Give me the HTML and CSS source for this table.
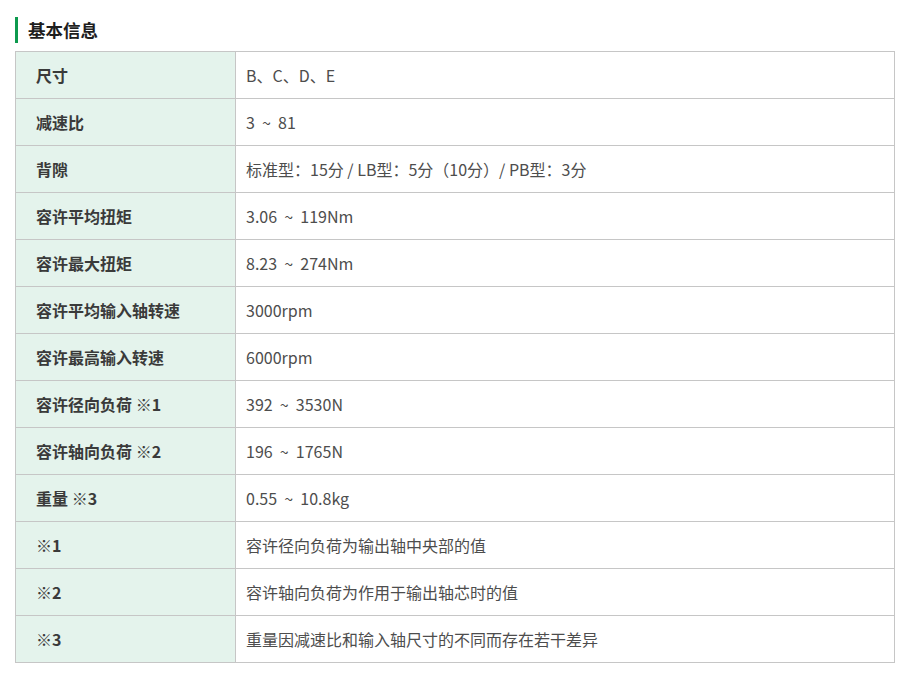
FILE: index.html
```html
<!DOCTYPE html>
<html lang="zh-CN">
<head>
<meta charset="utf-8">
<title>基本信息</title>
<link rel="stylesheet" href="styles.css">
</head>
<body>
<section class="info">
  <h2 class="info-title">基本信息</h2>
  <table class="spec">
    <tbody>
      <tr><th>尺寸</th><td>B、C、D、E</td></tr>
      <tr><th>减速比</th><td>3 &nbsp;~&nbsp; 81</td></tr>
      <tr><th>背隙</th><td>标准型：15分 / LB型：5分（10分）/ PB型：3分</td></tr>
      <tr><th>容许平均扭矩</th><td>3.06 &nbsp;~&nbsp; 119Nm</td></tr>
      <tr><th>容许最大扭矩</th><td>8.23 &nbsp;~&nbsp; 274Nm</td></tr>
      <tr><th>容许平均输入轴转速</th><td>3000rpm</td></tr>
      <tr><th>容许最高输入转速</th><td>6000rpm</td></tr>
      <tr><th>容许径向负荷 ※1</th><td>392 &nbsp;~&nbsp; 3530N</td></tr>
      <tr><th>容许轴向负荷 ※2</th><td>196 &nbsp;~&nbsp; 1765N</td></tr>
      <tr><th>重量 ※3</th><td>0.55 &nbsp;~&nbsp; 10.8kg</td></tr>
      <tr><th>※1</th><td>容许径向负荷为输出轴中央部的值</td></tr>
      <tr><th>※2</th><td>容许轴向负荷为作用于输出轴芯时的值</td></tr>
      <tr><th>※3</th><td>重量因减速比和输入轴尺寸的不同而存在若干差异</td></tr>
    </tbody>
  </table>
</section>
</body>
</html>
```

FILE: styles.css
```css
html, body {
  margin: 0;
  padding: 0;
  background: #fff;
}
body {
  font-family: "Noto Sans CJK SC", "Noto Sans", sans-serif;
  color: #333;
}
.info {
  padding: 17px 12px 0 15px;
}
.info-title {
  margin: 0 0 8px 0;
  border-left: 3px solid #0d9a4e;
  padding-left: 10px;
  font-size: 17.5px;
  font-weight: bold;
  line-height: 26px;
  height: 26px;
  color: #1e1e1e;
}
.spec {
  width: 880px;
  border-collapse: collapse;
  font-size: 16px;
}
.spec th, .spec td {
  border: 1px solid #c6c6c6;
  height: 46px;
  padding: 0;
  line-height: 20px;
  vertical-align: middle;
  text-align: left;
}
.spec th {
  width: 199px;
  background: #e4f3ec;
  padding-left: 20px;
  font-weight: bold;
  color: #3a3a3a;
}
.spec td {
  padding-left: 10px;
  font-weight: normal;
  color: #4d4d4d;
}
```
